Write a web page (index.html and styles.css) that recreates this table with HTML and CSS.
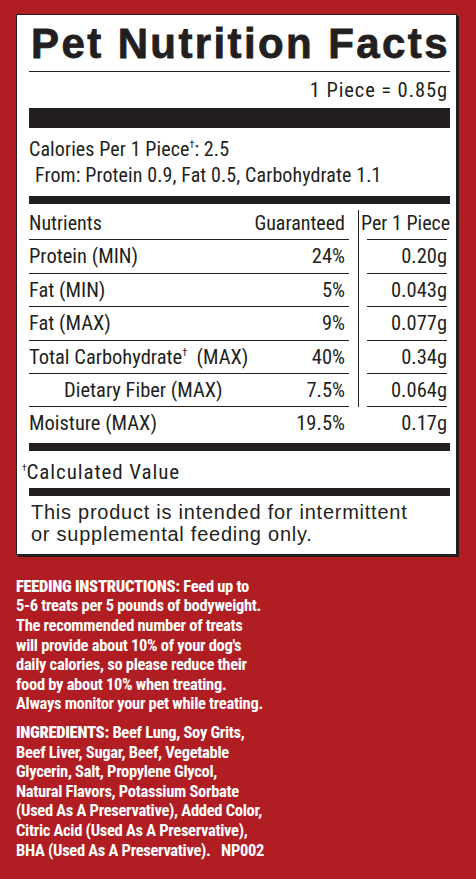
FILE: index.html
```html
<!DOCTYPE html>
<html lang="en">
    <head>
        <meta charset="UTF-8">
        <meta name="viewport" content="width=device-width, initial-scale=1.0">
        <title>Pet Nutrition Facts</title>
        <link rel="stylesheet" href="styles.css">
    </head>
    <body>
        <div class="label">
            <h1 class="titulo">Pet Nutrition Facts</h1>
            <div class="porcao">1 Piece = 0.85g</div>
            <div class="barra grossa"></div>
            <div class="calorias">
                Calories Per 1 Piece<sup>†</sup>: 2.5<br>
                <span class="from">From: Protein 0.9, Fat 0.5, Carbohydrate 1.1</span>
            </div>
            <div class="barra"></div>

            <div class="tabela">
                <div class="linha cabecalho">
                    <div class="esq"><span class="nome">Nutrients</span><span class="val">Guaranteed</span></div>
                    <div class="div"></div>
                    <div class="dir"><span class="per">Per 1 Piece</span></div>
                </div>
                <div class="linha">
                    <div class="esq"><span class="nome">Protein (MIN)</span><span class="val">24%</span></div>
                    <div class="div"></div>
                    <div class="dir">0.20g</div>
                </div>
                <div class="linha">
                    <div class="esq"><span class="nome">Fat (MIN)</span><span class="val">5%</span></div>
                    <div class="div"></div>
                    <div class="dir">0.043g</div>
                </div>
                <div class="linha">
                    <div class="esq"><span class="nome">Fat (MAX)</span><span class="val">9%</span></div>
                    <div class="div"></div>
                    <div class="dir">0.077g</div>
                </div>
                <div class="linha">
                    <div class="esq"><span class="nome">Total Carbohydrate<sup>†</sup>&nbsp; (MAX)</span><span class="val">40%</span></div>
                    <div class="div"></div>
                    <div class="dir">0.34g</div>
                </div>
                <div class="linha">
                    <div class="esq"><span class="nome recuo">Dietary Fiber (MAX)</span><span class="val">7.5%</span></div>
                    <div class="div"></div>
                    <div class="dir">0.064g</div>
                </div>
                <div class="linha ultima">
                    <div class="esq"><span class="nome">Moisture (MAX)</span><span class="val">19.5%</span></div>
                    <div class="div"></div>
                    <div class="dir">0.17g</div>
                </div>
            </div>

            <div class="barra"></div>
            <div class="calculado"><sup>†</sup>Calculated Value</div>
            <div class="barra"></div>
            <p class="aviso">This product is intended for intermittent<br>or supplemental feeding only.</p>
        </div>

        <div class="vermelho">
            <p><b>FEEDING INSTRUCTIONS:</b> Feed up to<br>
            5-6 treats per 5 pounds of bodyweight.<br>
            The recommended number of treats<br>
            will provide about 10% of your dog's<br>
            daily calories, so please reduce their<br>
            food by about 10% when treating.<br>
            Always monitor your pet while treating.</p>

            <p class="ingredientes"><b>INGREDIENTS:</b> Beef Lung, Soy Grits,<br>
            Beef Liver, Sugar, Beef, Vegetable<br>
            Glycerin, Salt, Propylene Glycol,<br>
            Natural Flavors, Potassium Sorbate<br>
            (Used As A Preservative), Added Color,<br>
            Citric Acid (Used As A Preservative),<br>
            BHA (Used As A Preservative).&nbsp;&nbsp; NP002</p>
        </div>
    </body>
</html>
```

FILE: styles.css
```css
:root {
    --vermelho: #b01e24;
    --texto: #231f20;
    --estreita: "Roboto Condensed", "DejaVu Sans Condensed", "Liberation Sans", sans-serif;
}

body {
    margin: 0;
    padding: 0;
    background-color: var(--vermelho);
    color: var(--texto);
    font-family: "Liberation Sans", Arial, sans-serif;
    height: 879px;
    overflow: hidden;
}

.label {
    margin: 14px 0 0 16px;
    background-color: #ffffff;
    border: 1px solid #231f20;
    box-shadow: 2px 2px 0 #2a1a1b;
    padding: 5px 6px 9px 12px;
    width: 421px;
}

.titulo {
    margin: 0;
    font-size: 42px;
    line-height: 48px;
    font-weight: 900;
    letter-spacing: 2.4px;
    -webkit-text-stroke: 0.8px #231f20;
    padding: 0 0 3px 2px;
    border-bottom: 1px solid var(--texto);
    white-space: nowrap;
}

.porcao {
    font-family: var(--estreita);
    font-size: 20.5px;
    line-height: 36px;
    text-align: right;
    padding-right: 2px;
    letter-spacing: 0.9px;
}

.barra {
    height: 8px;
    background-color: var(--texto);
}

.barra.grossa {
    height: 20px;
}

.calorias {
    font-family: var(--estreita);
    font-size: 20px;
    line-height: 26px;
    letter-spacing: 0.1px;
    padding-top: 8px;
    margin-bottom: 8px;
    white-space: nowrap;
}

.calorias .from {
    padding-left: 6px;
}

sup {
    font-size: 0.5em;
    vertical-align: 0.8em;
    line-height: 0;
}

.tabela {
    font-family: var(--estreita);
    font-size: 20.5px;
    white-space: nowrap;
}

.linha {
    display: flex;
    line-height: 32.4px;
}

.linha .esq {
    width: 320px;
    display: flex;
    justify-content: space-between;
    border-bottom: 1px solid var(--texto);
    padding-right: 4px;
    box-sizing: border-box;
}

.linha .div {
    width: 18px;
    position: relative;
}

.linha .div::before {
    content: "";
    position: absolute;
    left: 9px;
    top: 0;
    bottom: 0;
    width: 1px;
    background-color: var(--texto);
}

.linha .dir {
    width: 80px;
    text-align: right;
    border-bottom: 1px solid var(--texto);
}

.cabecalho {
    padding-top: 3px;
    font-size: 20px;
}

.cabecalho .div::before {
    top: 3px;
}

.cabecalho .per {
    margin-left: -6px;
}

.recuo {
    padding-left: 35px;
}

.linha.ultima .esq,
.linha.ultima .dir {
    border-bottom: none;
}

.linha.ultima .div::before {
    display: none;
}

.linha.ultima {
    margin-bottom: 3px;
}

.calculado {
    font-family: var(--estreita);
    font-size: 21px;
    line-height: 26px;
    letter-spacing: 0.9px;
    padding: 8px 0 3px 0;
    margin-left: -7px;
}

.calculado sup {
    font-size: 0.45em;
    letter-spacing: 0;
}

.aviso {
    margin: 0;
    padding: 5px 0 0 2px;
    font-size: 20px;
    line-height: 22px;
    letter-spacing: 0.75px;
    white-space: nowrap;
}

.vermelho {
    padding: 22px 0 0 16px;
    color: #ffffff;
    font-family: var(--estreita);
    font-weight: bold;
    font-size: 16.5px;
    line-height: 19.6px;
    letter-spacing: -0.3px;
}

.vermelho p {
    margin: 0;
    white-space: nowrap;
}

.ingredientes {
    margin-top: 9px !important;
}
```
